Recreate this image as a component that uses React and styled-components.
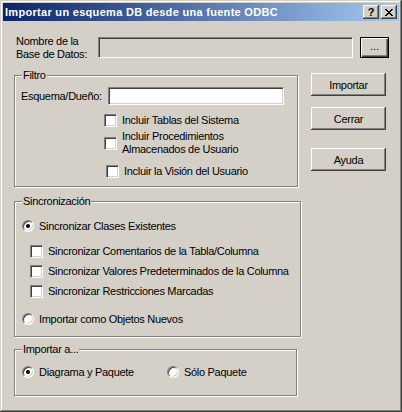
import React from "react";
import styled, { createGlobalStyle } from "styled-components";

const GlobalStyle = createGlobalStyle`
  html, body { margin: 0; padding: 0; background: #d4d0c8; }
  body { font-family: "Liberation Sans", Arial, sans-serif; font-size: 11px; color: #000; }
  * { box-sizing: border-box; }
`;

const Window = styled.div`
  width: 402px;
  height: 412px;
  padding: 3px;
  background: #d4d0c8;
  box-shadow: inset -1px -1px #404040, inset 1px 1px #d4d0c8, inset -2px -2px #808080, inset 2px 2px #fff;
  display: flex;
  flex-direction: column;
  font-family: "Liberation Sans", Arial, sans-serif;
  font-size: 11px;
  line-height: 13px;
  letter-spacing: -0.3px;
`;

const TitleBar = styled.div`
  height: 18px;
  display: flex;
  align-items: center;
  padding: 0 2px 0 2px;
  background: linear-gradient(to right, #0a246a, #a6caf0);
`;

const TitleText = styled.span`
  flex: 1;
  color: #fff;
  font-weight: bold;
  font-size: 11px;
  letter-spacing: 0.3px;
  white-space: nowrap;
`;

const TitleButton = styled.button`
  width: 16px;
  height: 14px;
  margin-left: ${(p) => p.$gap || 0}px;
  padding: 0;
  border: none;
  background: #d4d0c8;
  box-shadow: inset -1px -1px #404040, inset 1px 1px #fff, inset -2px -2px #808080, inset 2px 2px #d4d0c8;
  display: flex;
  align-items: center;
  justify-content: center;
  font-family: "Liberation Sans", Arial, sans-serif;
  font-weight: bold;
  font-size: 11px;
  line-height: 1;
  color: #000;
`;

const Content = styled.div`
  display: flex;
  flex-direction: column;
  padding-left: 11px;
`;

const DbRow = styled.div`
  margin-top: 16px;
  height: 21px;
  display: flex;
  align-items: center;
  padding-left: 2px;
`;

const DbLabel = styled.div`
  width: 82px;
  line-height: 13px;
`;

const ReadOnlyField = styled.div`
  width: 255px;
  height: 21px;
  background: #d4d0c8;
  border: 1px solid;
  border-color: #808080 #fff #fff #808080;
  box-shadow: inset 1px 1px #404040, inset -1px -1px #d4d0c8;
`;

const BrowseButton = styled.button`
  margin-left: 7px;
  width: 29px;
  height: 21px;
  padding: 0 0 3px 0;
  border: 1px solid #000;
  background: #d4d0c8;
  box-shadow: inset 1px 1px #fff, inset -1px -1px #404040, inset -2px -2px #808080;
  font-family: "Liberation Sans", Arial, sans-serif;
  font-size: 11px;
  color: #000;
`;

const MainRow = styled.div`
  margin-top: 15px;
  display: flex;
  align-items: flex-start;
  gap: 13px;
`;

const Group = styled.div`
  position: relative;
  width: ${(p) => p.$width}px;
  margin-top: ${(p) => p.$mt || 0}px;
  padding: ${(p) => p.$pad};
  border: 1px solid #808080;
  box-shadow: inset 1px 1px #fff, 1px 1px #fff;
  display: flex;
  flex-direction: column;
`;

const Legend = styled.span`
  position: absolute;
  top: -7px;
  left: 7px;
  padding: 0 1px;
  background: #d4d0c8;
  line-height: 13px;
`;

const FieldRow = styled.div`
  display: flex;
  align-items: center;
  height: 18px;
`;

const FieldLabel = styled.label`
  width: 87px;
`;

const TextInput = styled.div`
  width: 176px;
  height: 18px;
  background: #fff;
  border: 1px solid;
  border-color: #808080 #fff #fff #808080;
  box-shadow: inset 1px 1px #404040, inset -1px -1px #d4d0c8;
`;

const OptionRow = styled.div`
  display: flex;
  align-items: center;
  gap: 5px;
  min-height: 14px;
  margin-top: ${(p) => p.$mt || 0}px;
  padding-left: ${(p) => p.$indent || 0}px;
`;

const Option = styled.div`
  display: flex;
  align-items: center;
  gap: 5px;
  width: ${(p) => (p.$width ? `${p.$width}px` : "auto")};
`;

const Checkbox = styled.span`
  flex: none;
  width: 13px;
  height: 13px;
  background: #fff;
  border: 1px solid;
  border-color: #808080 #fff #fff #808080;
  box-shadow: inset 1px 1px #404040, inset -1px -1px #d4d0c8;
`;

const Radio = styled.span`
  flex: none;
  position: relative;
  width: 12px;
  height: 12px;
  border-radius: 50%;
  background: #fff;
  border: 1px solid;
  border-color: #808080 #fff #fff #808080;
  box-shadow: inset 1px 1px #404040, inset -1px -1px #d4d0c8;
  &::after {
    content: "";
    display: ${(p) => (p.$checked ? "block" : "none")};
    position: absolute;
    left: 3px;
    top: 3px;
    width: 4px;
    height: 4px;
    border-radius: 50%;
    background: #000;
  }
`;

const OptionText = styled.span`
  line-height: 13px;
  white-space: nowrap;
`;

const ButtonColumn = styled.div`
  display: flex;
  flex-direction: column;
`;

const PushButton = styled.button`
  width: 75px;
  height: 23px;
  margin-top: ${(p) => p.$mt || 0}px;
  padding: 0;
  border: none;
  background: #d4d0c8;
  box-shadow: inset -1px -1px #404040, inset 1px 1px #fff, inset -2px -2px #808080, inset 2px 2px #d4d0c8;
  font-family: "Liberation Sans", Arial, sans-serif;
  font-size: 11px;
  letter-spacing: -0.3px;
  color: #000;
`;

const CloseGlyph = () => (
  <svg width="8" height="7" viewBox="0 0 8 7" shapeRendering="crispEdges">
    <path d="M0 0h2v1h1v1h2V1h1V0h2v1H7v1H6v1H5v1h1v1h1v1h1v1H6V6H5V5H3v1H2v1H0V6h1V5h1V4h1V3H2V2H1V1H0z" fill="#000" />
  </svg>
);

export default function App() {
  return (
    <>
      <GlobalStyle />
      <Window>
        <TitleBar>
          <TitleText>Importar un esquema DB desde una fuente ODBC</TitleText>
          <TitleButton>?</TitleButton>
          <TitleButton $gap={2}>
            <CloseGlyph />
          </TitleButton>
        </TitleBar>
        <Content>
          <DbRow>
            <DbLabel>
              Nombre de la
              <br />
              Base de Datos:
            </DbLabel>
            <ReadOnlyField />
            <BrowseButton>...</BrowseButton>
          </DbRow>

          <MainRow>
            <Group $width={284} $mt={2} $pad="11px 0 8px 6px">
              <Legend>Filtro</Legend>
              <FieldRow>
                <FieldLabel>Esquema/Dueño:</FieldLabel>
                <TextInput />
              </FieldRow>
              <OptionRow $mt={8} $indent={83}>
                <Checkbox />
                <OptionText>Incluir Tablas del Sistema</OptionText>
              </OptionRow>
              <OptionRow $mt={3} $indent={83}>
                <Checkbox />
                <OptionText>
                  Incluir Procedimientos
                  <br />
                  Almacenados de Usuario
                </OptionText>
              </OptionRow>
              <OptionRow $mt={8} $indent={85}>
                <Checkbox />
                <OptionText>Incluir la Visión del Usuario</OptionText>
              </OptionRow>
            </Group>
            <ButtonColumn>
              <PushButton>Importar</PushButton>
              <PushButton $mt={11}>Cerrar</PushButton>
              <PushButton $mt={18}>Ayuda</PushButton>
            </ButtonColumn>
          </MainRow>

          <Group $width={287} $mt={14} $pad="17px 0 10px 7px">
            <Legend>Sincronización</Legend>
            <OptionRow>
              <Radio $checked />
              <OptionText>Sincronizar Clases Existentes</OptionText>
            </OptionRow>
            <OptionRow $mt={11} $indent={8}>
              <Checkbox />
              <OptionText>Sincronizar Comentarios de la Tabla/Columna</OptionText>
            </OptionRow>
            <OptionRow $mt={6} $indent={8}>
              <Checkbox />
              <OptionText>Sincronizar Valores Predeterminados de la Columna</OptionText>
            </OptionRow>
            <OptionRow $mt={6} $indent={8}>
              <Checkbox />
              <OptionText>Sincronizar Restricciones Marcadas</OptionText>
            </OptionRow>
            <OptionRow $mt={14}>
              <Radio />
              <OptionText>Importar como Objetos Nuevos</OptionText>
            </OptionRow>
          </Group>

          <Group $width={283} $mt={12} $pad="15px 0 16px 7px">
            <Legend>Importar a...</Legend>
            <OptionRow>
              <Option $width={140}>
                <Radio $checked />
                <OptionText>Diagrama y Paquete</OptionText>
              </Option>
              <Option>
                <Radio />
                <OptionText>Sólo Paquete</OptionText>
              </Option>
            </OptionRow>
          </Group>
        </Content>
      </Window>
    </>
  );
}
